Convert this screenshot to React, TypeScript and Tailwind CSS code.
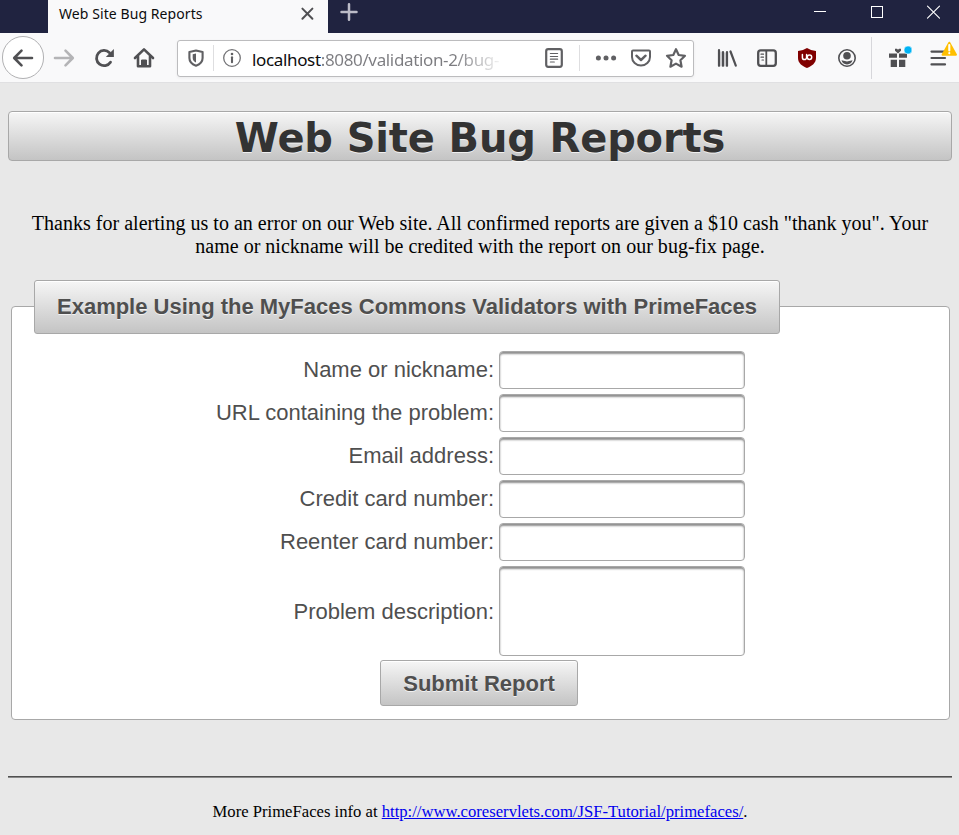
import type { ReactNode } from "react";

function Icon({ children, className = "" }: { children: ReactNode; className?: string }) {
  return (
    <svg
      viewBox="-11 -11 22 22"
      width="22"
      height="22"
      fill="none"
      stroke="#505053"
      strokeWidth="2"
      strokeLinecap="round"
      strokeLinejoin="round"
      className={`shrink-0 overflow-visible ${className}`}
    >
      {children}
    </svg>
  );
}

function ToolButton({ children }: { children: ReactNode }) {
  return <div className="flex h-10 w-10 shrink-0 items-center justify-center">{children}</div>;
}

function TabStrip() {
  return (
    <div className="flex h-[33px] bg-[#202340]">
      <div className="ml-12 flex w-[280px] items-start bg-[#f9f9fa] pl-[11px] pt-[3px]">
        <span className="w-[237px] whitespace-nowrap font-['Noto_Sans','Open_Sans',sans-serif] text-[14px] leading-[22px] tracking-[0.08px] text-[#0c0c0d]">
          Web Site Bug Reports
        </span>
        <Icon>
          <path d="M-4.6 -5.4L5.4 4.8M5.4 -5.4L-4.6 4.8" strokeWidth="2" />
        </Icon>
      </div>
      <div className="ml-[10px] pt-[1px]">
        <Icon>
          <path d="M-7.5 0H7.5M0 -7.7V7.7" stroke="#bcbcc8" strokeWidth="2.5" />
        </Icon>
      </div>
      <div className="ml-auto mr-[15px] flex gap-[35px] pt-[1px]">
        <Icon>
          <path d="M-5 -.5H7" stroke="#fff" strokeWidth="1" strokeLinecap="butt" />
        </Icon>
        <Icon>
          <rect x="-4.5" y="-5.5" width="11" height="11" stroke="#fff" strokeWidth="1" strokeLinejoin="miter" />
        </Icon>
        <Icon>
          <path d="M-5.5 -5.8L6.5 6.2M6.5 -5.8L-5.5 6.2" stroke="#fff" strokeWidth="1.1" />
        </Icon>
      </div>
    </div>
  );
}

function AddressBar() {
  return (
    <div className="ml-[13px] mt-[2px] flex h-[37px] w-[517px] items-center rounded-[3px] border border-[#bcbcbe] bg-white pb-[1px] shadow-[0_1px_3px_rgba(0,0,0,0.06)]">
      <Icon className="ml-[7px]">
        <path d="M0 -7.5L6.6 -6V0C6.6 4 3 6.7 0 7.8C-3 6.7 -6.6 4 -6.6 0V-6Z" stroke="#606063" strokeWidth="2.1" />
        <path d="M0 -4.4V4.5C-2 3.6 -3.3 2 -3.3 0V-3.7Z" fill="#606063" stroke="none" />
      </Icon>
      <span className="ml-[6px] h-[26px] w-px bg-[#dedee0]" />
      <Icon className="ml-[7px]">
        <circle r="8.3" stroke="#737376" strokeWidth="1.3" />
        <circle cy="-4" r="1.3" fill="#606063" stroke="none" />
        <path d="M0 -0.8V4.2" stroke="#606063" strokeWidth="2.1" />
      </Icon>
      <div className="ml-[9px] w-[291px] whitespace-nowrap pt-[3px] font-['Noto_Sans','Open_Sans',sans-serif] text-[17px] leading-6 tracking-[-0.35px] text-[#7c7c80]">
        <span className="text-[#0c0c0d]">localhost</span>
        <span className="bg-gradient-to-r from-[#7c7c80] from-75% to-[#f2f2f2] bg-clip-text text-transparent">:8080/validation-2/bug-</span>
      </div>
      <Icon>
        <rect x="-7.8" y="-8.8" width="15.6" height="17.6" rx="2" stroke="#606063" strokeWidth="2.2" />
        <path d="M-3.6 -4.5H3.6M-3.6 -1.5H3.6M-3.6 1.2H3.6M-3.6 4H.3" stroke="#606063" strokeWidth="1.2" />
      </Icon>
      <span className="ml-[14px] h-[26px] w-px bg-[#dedee0]" />
      <Icon className="ml-[15px]">
        <g fill="#606063" stroke="none">
          <circle cx="-7.6" r="2.5" />
          <circle r="2.5" />
          <circle cx="7.6" r="2.5" />
        </g>
      </Icon>
      <Icon className="ml-[13px]">
        <path d="M-8 -7.6H8Q9 -7.6 9 -6.6V-1A9 8.6 0 0 1 -9 -1V-6.6Q-9 -7.6 -8 -7.6Z" stroke="#606063" />
        <path d="M-4.6 -2.3L0 2L4.6 -2.3" stroke="#606063" strokeWidth="2.4" />
      </Icon>
      <Icon className="ml-[13px]">
        <path d="M0 -8.8L2.7 -3L9 -2.2L4.4 2.2L5.6 8.7L0 5.6L-5.6 8.7L-4.4 2.2L-9 -2.2L-2.7 -3Z" stroke="#606063" strokeWidth="2.2" />
      </Icon>
    </div>
  );
}

function NavBar() {
  return (
    <div className="flex h-[50px] items-center border-b border-[#e0e0e2] bg-[#f9f9fa] pl-[2px]">
      <div className="flex h-[43px] w-[42px] items-center justify-center rounded-full border border-[#b1b1b3] bg-white">
        <Icon>
          <path d="M9 0H-8M-1.5 -7.3L-8.8 0L-1.5 7.3" strokeWidth="2.6" />
        </Icon>
      </div>
      <ToolButton>
        <Icon>
          <path d="M-9 0H8M1.5 -7.3L8.8 0L1.5 7.3" stroke="#b4b4b6" strokeWidth="2.6" />
        </Icon>
      </ToolButton>
      <ToolButton>
        <Icon>
          <path d="M6.5 4.2A7.6 7.6 0 1 1 5.5 -5.3" strokeWidth="2.8" />
          <path d="M9.9 -9V-.9H1.8Z" fill="#505053" stroke="none" />
        </Icon>
      </ToolButton>
      <ToolButton>
        <Icon>
          <path d="M-9 0L0 -8.6L9 0" strokeWidth="2.6" />
          <path d="M-6 -1.5V8.3H6V-1.5" strokeWidth="2.6" />
          <path d="M-2.5 8.5V2H2.5V8.5" fill="#505053" strokeWidth="1" />
        </Icon>
      </ToolButton>
      <AddressBar />
      <div className="ml-[13px] flex items-center">
        <ToolButton>
          <Icon>
            <path d="M-8 -7.8V7.8M-4 -5.8V7.8M0 -5.8V7.8M3.5 -6.5L8.8 7.6" strokeWidth="2.2" />
            <path d="M-6 -6V8M-2 -5V8" stroke="#a0a0a2" strokeWidth=".8" />
          </Icon>
        </ToolButton>
        <ToolButton>
          <Icon>
            <rect x="-8.8" y="-7.6" width="17.6" height="15.4" rx="2.5" strokeWidth="2.3" />
            <path d="M-.7 -7V7" strokeWidth="1.8" />
            <path d="M-6 -3.8H-3.5M-6 -.8H-3.5M-5 2H-3.5" strokeWidth="1.2" />
          </Icon>
        </ToolButton>
        <ToolButton>
          <Icon>
            <path d="M0 -10Q4 -7.3 9 -7V0C9 5 5 8 0 10C-5 8 -9 5 -9 0V-7Q-4 -7.3 0 -10Z" fill="#800000" stroke="none" />
            <path d="M-4.6 -3.4V-.5A2.1 2.1 0 0 0 -.4 -.5V-3.4" stroke="#fff" strokeWidth="1.5" />
            <circle cx="2.5" cy="-.8" r="2.2" stroke="#fff" strokeWidth="1.5" />
          </Icon>
        </ToolButton>
        <ToolButton>
          <Icon>
            <circle r="8.2" strokeWidth="1.6" />
            <circle cy="-2.3" r="3.8" fill="#505053" stroke="none" />
            <path d="M-5.5 2.2Q-3 2.6 -2 3.1Q0 4 2 3.1Q3 2.6 5.5 2.2Q4.5 6.2 0 6.4Q-4.5 6.2 -5.5 2.2Z" fill="#505053" stroke="none" />
          </Icon>
        </ToolButton>
      </div>
      <span className="ml-[4px] h-[42px] w-px bg-[#d7d7db]" />
      <div className="ml-[6px] flex items-center">
        <ToolButton>
          <Icon>
            <path d="M-9 -4.5H-1V-.3H-9ZM1 -4.5H9V-.3H1ZM-7.3 1.7H-1V9H-7.3ZM1 1.7H7.3V9H1Z" fill="#505053" stroke="none" />
            <path d="M0 -4.4L-3 -7.3V-9.3H-1L0 -8.3L1 -9.3H3V-7.3Z" fill="#505053" stroke="none" />
            <circle cx="10" cy="-8" r="4" fill="#00b3f4" stroke="#fff" strokeWidth=".5" />
          </Icon>
        </ToolButton>
        <ToolButton>
          <Icon>
            <path d="M-6.5 -6.4H7M-6.5 0H7M-6.5 6.4H7" strokeWidth="2.2" />
            <path d="M11.3 -15.3L18 -3.3H4.6Z" fill="#ffbf00" stroke="#ffbf00" />
            <path d="M11.3 -13V-7.5M11.3 -4.9V-4.7" stroke="#fff" strokeWidth="2.1" />
          </Icon>
        </ToolButton>
      </div>
    </div>
  );
}

const surface =
  "border border-[#a8a8a8] bg-gradient-to-b from-[#f6f6f6] to-[#c4c4c4] shadow-[inset_0_1px_0_#ffffff]";
const field =
  "block w-[246px] resize-none rounded-[4px] border border-[#a8a8a8] bg-white shadow-[inset_0_2px_2px_#8f8f8f] outline-none";

const fields = [
  "Name or nickname:",
  "URL containing the problem:",
  "Email address:",
  "Credit card number:",
  "Reenter card number:",
];

function BugForm() {
  return (
    <div className="ml-[3px] mr-[9px] flex h-[414px] flex-col rounded-[4px] border border-[#a8a8a8] bg-white font-['Liberation_Sans',Arial,sans-serif] text-[22px] text-[#4f4f4f]">
      <div className={`-mt-[27px] ml-[22px] flex h-[54px] w-[746px] shrink-0 items-center justify-center whitespace-nowrap rounded-[3px] pb-[2px] font-bold tracking-[-0.01px] [text-shadow:0_1px_0_rgba(255,255,255,0.7)] ${surface}`}>
        Example Using the MyFaces Commons Validators with PrimeFaces
      </div>
      <form className="mt-[17px] flex flex-col">
        <div className="flex flex-col gap-[5px]">
          {fields.map((label) => (
            <label key={label} className="flex h-[38px] items-center">
              <span className="w-[482px] whitespace-nowrap pb-[2px] text-right">{label}</span>
              <input className={`ml-[5px] h-[38px] ${field}`} />
            </label>
          ))}
          <label className="flex h-[90px] items-center">
            <span className="w-[482px] whitespace-nowrap text-right">Problem description:</span>
            <textarea className={`ml-[5px] h-[90px] ${field}`} />
          </label>
        </div>
        <button
          type="button"
          className={`ml-[368px] mt-[4px] h-[46px] w-[198px] whitespace-nowrap rounded-[3px] font-bold [text-shadow:0_1px_0_rgba(255,255,255,0.7)] ${surface}`}
        >
          Submit Report
        </button>
      </form>
    </div>
  );
}

export default function App() {
  return (
    <div className="h-[835px] w-[959px] overflow-hidden bg-[#e8e8e8]">
      <TabStrip />
      <NavBar />
      <main className="pl-2 font-['Liberation_Serif','Times_New_Roman',serif] text-black">
        <h1 className={`mt-[28px] flex h-[50px] w-[944px] items-center justify-center whitespace-nowrap rounded-[4px] pt-[3px] font-['DejaVu_Sans',Verdana,sans-serif] text-[40px] font-bold leading-[48px] tracking-[-0.15px] text-[#333] [text-shadow:0_1px_0_rgba(255,255,255,0.7)] ${surface}`}>
          Web Site Bug Reports
        </h1>
        <p className="mt-[51px] w-[944px] whitespace-nowrap text-center text-[20px] leading-[23px] tracking-[0.02px]">
          Thanks for alerting us to an error on our Web site. All confirmed reports are given a $10 cash "thank you". Your
          <br />
          name or nickname will be credited with the report on our bug-fix page.
        </p>
        <div className="h-[48px]" />
        <BugForm />
        <hr className="mt-[56px] h-[2px] w-[944px] border-0 border-t border-[#505050] bg-[#8a8a8a]" />
        <footer className="mt-[24px] w-[944px] whitespace-nowrap text-center text-[16.65px] leading-5">
          More PrimeFaces info at{" "}
          <a href="#" className="text-[#0000ee] underline">
            http://www.coreservlets.com/JSF-Tutorial/primefaces/
          </a>
          .
        </footer>
      </main>
    </div>
  );
}
